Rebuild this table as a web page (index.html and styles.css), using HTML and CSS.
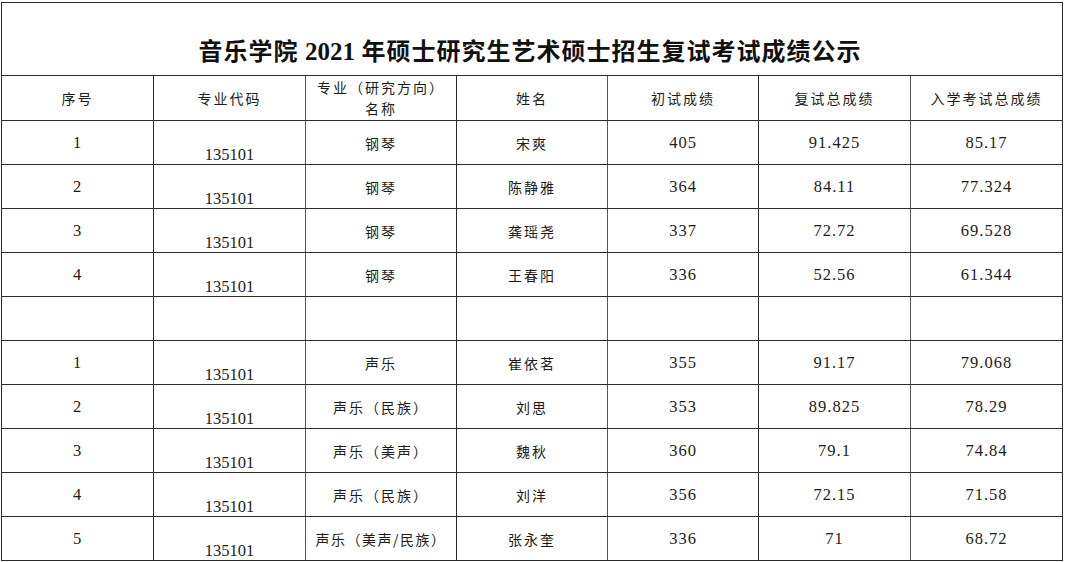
FILE: index.html
```html
<!DOCTYPE html>
<html lang="zh-CN">
<head>
<meta charset="utf-8">
<title>音乐学院2021年硕士研究生艺术硕士招生复试考试成绩公示</title>
<link rel="stylesheet" href="styles.css">
</head>
<body>
<div class="page">
<table class="sheet">
  <colgroup>
    <col class="c1"><col class="c2"><col class="c3"><col class="c4"><col class="c5"><col class="c6"><col class="c7">
  </colgroup>
  <tr class="title-row"><td colspan="7" class="title"><span class="cn">音乐学院</span> <span class="num">2021</span> <span class="cn">年硕士研究生艺术硕士招生复试考试成绩公示</span></td></tr>
  <tr class="head-row">
    <td>序号</td><td>专业代码</td><td class="wrap">专业（研究方向）<br>名称</td><td>姓名</td><td>初试成绩</td><td>复试总成绩</td><td>入学考试总成绩</td>
  </tr>
  <tr><td class="n">1</td><td class="code">135101</td><td>钢琴</td><td>宋爽</td><td class="n">405</td><td class="n">91.425</td><td class="n">85.17</td></tr>
  <tr><td class="n">2</td><td class="code">135101</td><td>钢琴</td><td>陈静雅</td><td class="n">364</td><td class="n">84.11</td><td class="n">77.324</td></tr>
  <tr><td class="n">3</td><td class="code">135101</td><td>钢琴</td><td>龚瑶尧</td><td class="n">337</td><td class="n">72.72</td><td class="n">69.528</td></tr>
  <tr><td class="n">4</td><td class="code">135101</td><td>钢琴</td><td>王春阳</td><td class="n">336</td><td class="n">52.56</td><td class="n">61.344</td></tr>
  <tr><td></td><td></td><td></td><td></td><td></td><td></td><td></td></tr>
  <tr><td class="n">1</td><td class="code">135101</td><td>声乐</td><td>崔依茗</td><td class="n">355</td><td class="n">91.17</td><td class="n">79.068</td></tr>
  <tr><td class="n">2</td><td class="code">135101</td><td>声乐（民族）</td><td>刘思</td><td class="n">353</td><td class="n">89.825</td><td class="n">78.29</td></tr>
  <tr><td class="n">3</td><td class="code">135101</td><td>声乐（美声）</td><td>魏秋</td><td class="n">360</td><td class="n">79.1</td><td class="n">74.84</td></tr>
  <tr><td class="n">4</td><td class="code">135101</td><td>声乐（民族）</td><td>刘洋</td><td class="n">356</td><td class="n">72.15</td><td class="n">71.58</td></tr>
  <tr><td class="n">5</td><td class="code">135101</td><td class="tight">声乐（美声/民族）</td><td>张永奎</td><td class="n">336</td><td class="n">71</td><td class="n">68.72</td></tr>
</table>
</div>
</body>
</html>
```
FILE: styles.css
```css
html, body {
  margin: 0;
  padding: 0;
  background: #ffffff;
}
.page {
  padding: 2px 0 0 1px;
}
.sheet {
  border-collapse: collapse;
  table-layout: fixed;
  width: 1062px;
  color: #1c1c1c;
  font-family: "Noto Sans CJK SC", "Liberation Serif", serif;
  font-size: 14px;
  letter-spacing: 2px;
}
.c1, .c2, .c6, .c7 { width: 152px; }
.c3, .c4, .c5 { width: 151px; }
.sheet td {
  border: 1px solid #2a2a2a;
  height: 43px;
  padding: 0;
  text-align: center;
  vertical-align: middle;
  line-height: 20px;
  white-space: nowrap;
  overflow: hidden;
}
.sheet td:nth-child(2),
.sheet td:nth-child(4),
.sheet td:nth-child(6) {
  border-right-color: #555;
}
.title-row td.title {
  height: 64px;
  vertical-align: bottom;
  padding-bottom: 8px;
  font-size: 24px;
  font-weight: bold;
  letter-spacing: 1px;
  color: #111;
  line-height: 30px;
  padding-right: 4px;
}
.title .num {
  font-family: "Liberation Serif", serif;
  font-size: 25px;
  letter-spacing: 0;
}
.head-row td {
  height: 44px;
}
.head-row td.wrap {
  line-height: 21px;
}
.sheet td.n {
  font-family: "Liberation Serif", serif;
  font-size: 16.5px;
  letter-spacing: 1px;
}
.sheet td.code {
  font-family: "Liberation Serif", serif;
  font-size: 16.5px;
  letter-spacing: 0;
  vertical-align: bottom;
  line-height: 18px;
}
.sheet td.tight {
  letter-spacing: 1.5px;
}
```
